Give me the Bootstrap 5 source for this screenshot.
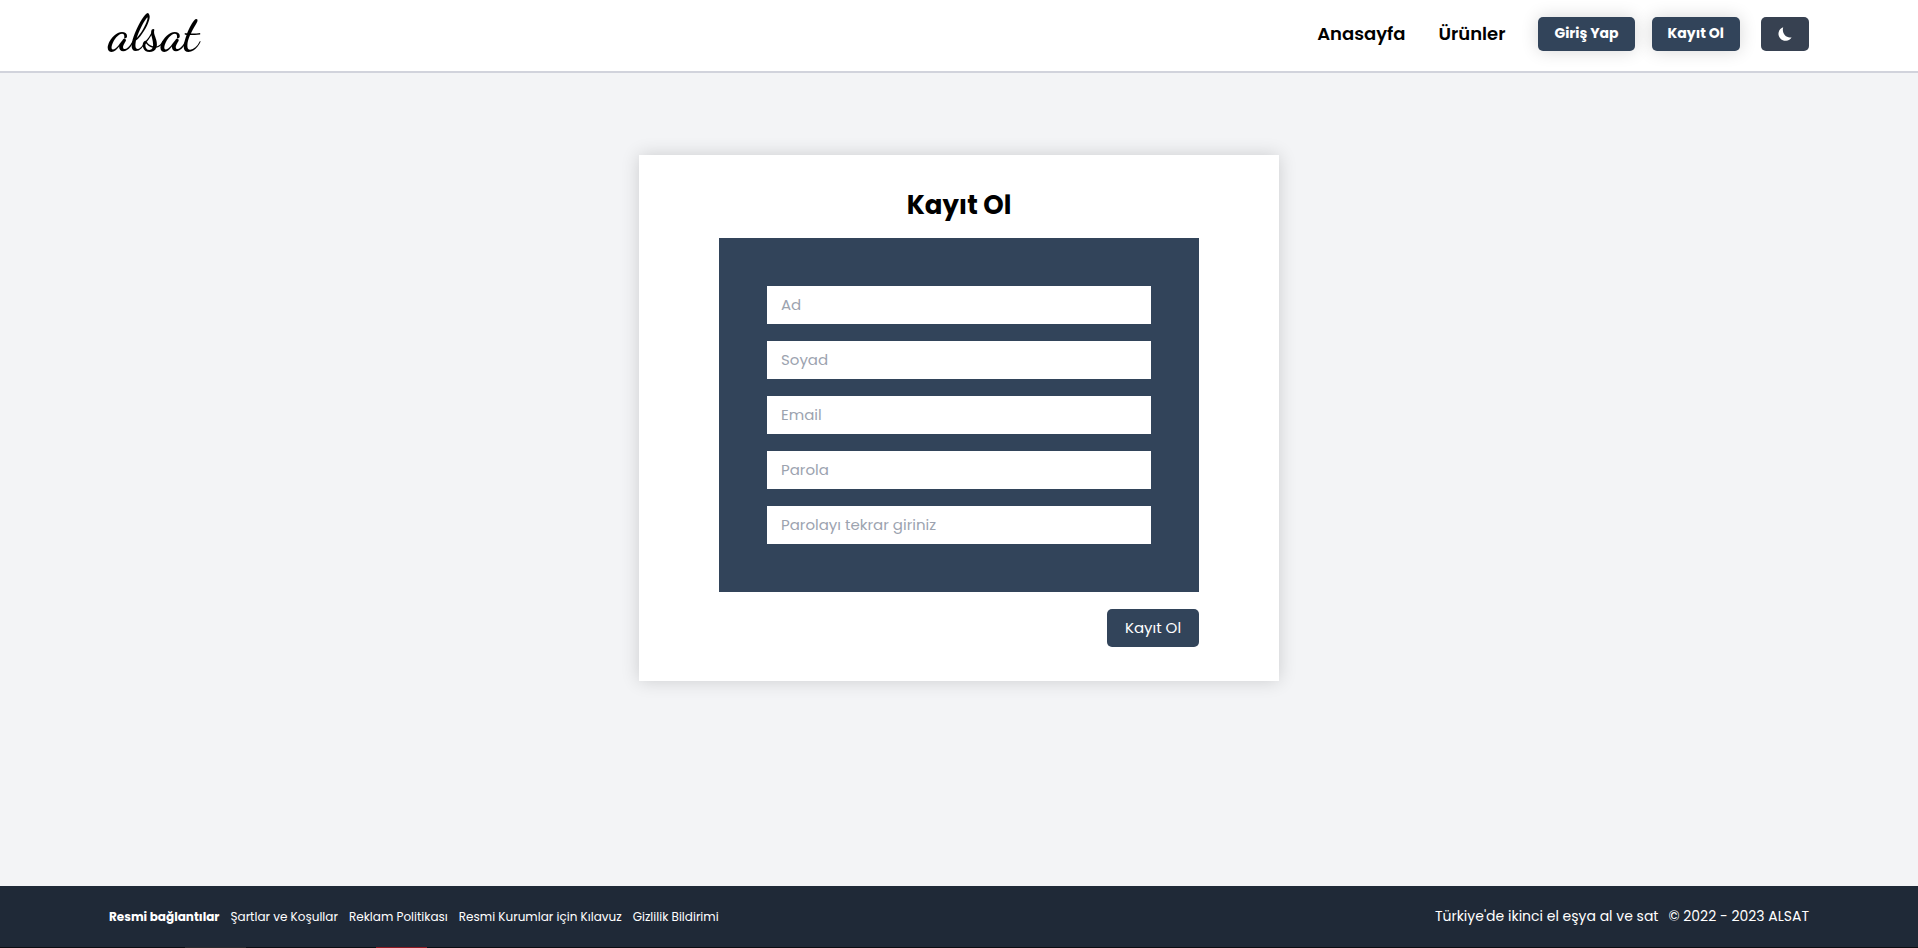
<!DOCTYPE html>
<html lang="tr">
<head>
<meta charset="utf-8">
<meta name="viewport" content="width=device-width, initial-scale=1">
<title>alsat - Kayıt Ol</title>
<link href="https://cdn.jsdelivr.net/npm/bootstrap@5.3.0/dist/css/bootstrap.min.css" rel="stylesheet">
<style>
  body { font-family: Poppins, Inter, sans-serif; background: #f3f4f6; color: #000; }
  a { color: inherit; text-decoration: none; }
  .page-pad { padding-left: 109px; padding-right: 109px; }
  .site-header { background: #fff; border-bottom: 2px solid #d1d3dc; min-height: 73px; }
  .brand { font-family: "Dancing Script", "Liberation Serif", serif; font-weight: 600; font-size: 51px; line-height: 68px; height: 71px; }
  .main-nav { gap: 33px; padding-bottom: 4px; }
  .main-nav > a { font-size: 18px; line-height: 24px; font-weight: 600; }
  .nav-buttons { gap: 17px; }
  .btn-navy { --bs-btn-bg: #32445a; --bs-btn-color: #fff; --bs-btn-hover-bg: #293a50; --bs-btn-hover-color: #fff; --bs-btn-border-width: 0; --bs-btn-border-radius: 5px; }
  .btn-top { height: 34px; padding: 0 16px; font-size: 14px; font-weight: 700; box-shadow: 0 0 17px rgba(0,0,0,.16); }
  .btn-theme { width: 48px; height: 34px; padding: 0; margin-left: 4px; --bs-btn-bg: #374151; }
  .page-main { padding: 82px 0; }
  .signup { width: 640px; max-width: 100%; background: #fff; padding: 34px 80px; box-shadow: 0 0 17px rgba(0,0,0,.16); }
  .signup h1 { font-size: 26px; line-height: 32px; font-weight: 700; margin-bottom: 17px; }
  .panel { background: #32445a; padding: 48px; gap: 17px; }
  .panel .form-control { height: 38px; border: 0; border-radius: 0; padding: 0 14px 2px; font-size: 15px; }
  .panel .form-control::placeholder { color: #9ca3af; }
  .btn-send { height: 38px; min-width: 92px; padding: 0 16px; font-size: 15px; margin-top: 17px; }
  .site-footer { background: #1f2937; color: #fff; min-height: 61px; font-size: 12px; }
  .site-footer .links { gap: 11px; }
  .site-footer .legal { gap: 10px; font-size: 14px; }
  .edge { height: 1px; background: linear-gradient(90deg, #0b0d12 185px, #2b2b2e 185px 246px, #0b0d12 246px 376px, #8e1a22 376px 427px, #0b0d12 427px); }
</style>
</head>
<body class="d-flex flex-column min-vh-100">
<header class="site-header page-pad d-flex flex-wrap justify-content-between align-items-center">
  <a href="#" class="brand">alsat</a>
  <nav class="main-nav d-flex flex-wrap align-items-center" aria-label="Ana menü">
    <a href="#">Anasayfa</a>
    <a href="#">Ürünler</a>
    <div class="nav-buttons d-flex align-items-center">
      <button type="button" class="btn btn-navy btn-top">Giriş Yap</button>
      <button type="button" class="btn btn-navy btn-top">Kayıt Ol</button>
      <button type="button" class="btn btn-navy btn-theme d-flex align-items-center justify-content-center" aria-label="Koyu tema">
        <svg width="14" height="14" viewBox="0 0 14 14" fill="#fff" aria-hidden="true"><path d="M5.2.2A7 7 0 1 0 13.6 10.2C8.5 11.6 3.4 6.5 5.2.2z"/></svg>
      </button>
    </div>
  </nav>
</header>
<main class="page-main flex-grow-1 d-flex flex-column align-items-center">
  <form class="signup d-flex flex-column">
    <h1 class="text-center">Kayıt Ol</h1>
    <div class="panel d-flex flex-column">
      <input class="form-control" type="text" placeholder="Ad" aria-label="Ad">
      <input class="form-control" type="text" placeholder="Soyad" aria-label="Soyad">
      <input class="form-control" type="email" placeholder="Email" aria-label="Email">
      <input class="form-control" type="password" placeholder="Parola" aria-label="Parola">
      <input class="form-control" type="password" placeholder="Parolayı tekrar giriniz" aria-label="Parolayı tekrar giriniz">
    </div>
    <button type="submit" class="btn btn-navy btn-send align-self-end">Kayıt Ol</button>
  </form>
</main>
<footer class="site-footer page-pad d-flex flex-wrap justify-content-between align-items-center">
  <div class="links d-flex flex-wrap">
    <strong>Resmi bağlantılar</strong>
    <a href="#">Şartlar ve Koşullar</a>
    <a href="#">Reklam Politikası</a>
    <a href="#">Resmi Kurumlar için Kılavuz</a>
    <a href="#">Gizlilik Bildirimi</a>
  </div>
  <div class="legal d-flex flex-wrap"><span>Türkiye'de ikinci el eşya al ve sat</span><span>© 2022 - 2023 ALSAT</span></div>
</footer>
<div class="edge"></div>
<script src="https://cdn.jsdelivr.net/npm/bootstrap@5.3.0/dist/js/bootstrap.bundle.min.js"></script>
</body>
</html>
